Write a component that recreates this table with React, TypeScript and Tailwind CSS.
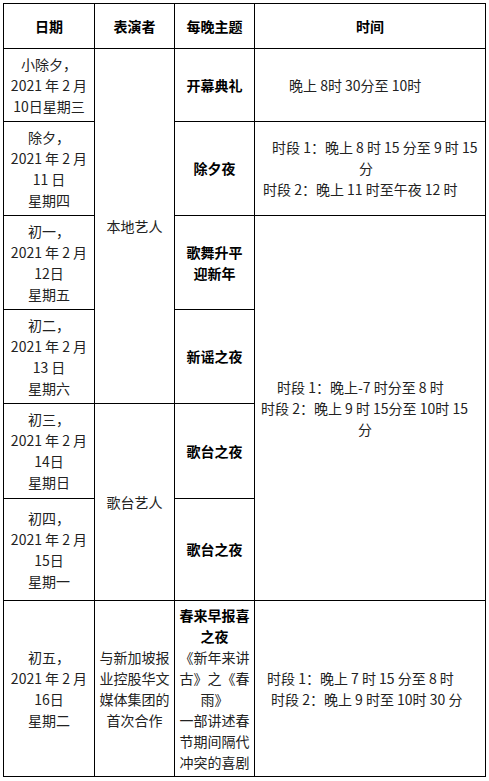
import React from "react";

const font = {
  fontFamily: '"Noto Sans CJK SC", "Noto Sans", sans-serif',
};

function Lines({ lines, bold }: { lines: string[]; bold?: boolean }) {
  return (
    <div className={bold ? "font-bold text-black" : "text-[#222]"}>
      {lines.map((l, i) => (
        <div key={i} className="whitespace-nowrap">
          {l}
        </div>
      ))}
    </div>
  );
}

function TimeLines({ lines }: { lines: { t: string; pl: number }[] }) {
  return (
    <div className="text-left text-[#222]">
      {lines.map((l, i) => (
        <div key={i} className="whitespace-nowrap" style={{ paddingLeft: l.pl }}>
          {l.t}
        </div>
      ))}
    </div>
  );
}

const td = "border border-black align-middle text-center p-0";

export default function App() {
  return (
    <div className="bg-white w-[489px] h-[781px] pt-[3px] pl-[3px]" style={font}>
      <table className="border-collapse table-fixed w-[482px] text-[14px] leading-[21px]">
        <colgroup>
          <col className="w-[91px]" />
          <col className="w-[80px]" />
          <col className="w-[80px]" />
          <col className="w-[231px]" />
        </colgroup>
        <tbody>
          <tr className="h-[45px]">
            <td className={td + " font-bold text-black"}>日期</td>
            <td className={td + " font-bold text-black"}>表演者</td>
            <td className={td + " font-bold text-black"}>每晚主题</td>
            <td className={td + " font-bold text-black"}>时间</td>
          </tr>
          <tr className="h-[73px]">
            <td className={td}>
              <Lines lines={["小除夕，", "2021 年 2 月", "10日星期三"]} />
            </td>
            <td className={td} rowSpan={4}>
              <Lines lines={["本地艺人"]} />
            </td>
            <td className={td}>
              <Lines bold lines={["开幕典礼"]} />
            </td>
            <td className={td}>
              <TimeLines lines={[{ t: "晚上 8时 30分至 10时", pl: 34 }]} />
            </td>
          </tr>
          <tr className="h-[94px]">
            <td className={td}>
              <Lines lines={["除夕，", "2021 年 2 月", "11 日", "星期四"]} />
            </td>
            <td className={td}>
              <Lines bold lines={["除夕夜"]} />
            </td>
            <td className={td}>
              <TimeLines
                lines={[
                  { t: "时段 1：晚上 8 时 15 分至 9 时 15", pl: 17 },
                  { t: "分", pl: 104 },
                  { t: "时段 2：晚上 11 时至午夜 12 时", pl: 8 },
                ]}
              />
            </td>
          </tr>
          <tr className="h-[94px]">
            <td className={td}>
              <Lines lines={["初一，", "2021 年 2 月", "12日", "星期五"]} />
            </td>
            <td className={td}>
              <Lines bold lines={["歌舞升平", "迎新年"]} />
            </td>
            <td className={td} rowSpan={4}>
              <TimeLines
                lines={[
                  { t: "时段 1：晚上-7 时分至 8 时", pl: 22 },
                  { t: "时段 2：晚上 9 时 15分至 10时 15", pl: 6 },
                  { t: "分", pl: 103 },
                ]}
              />
            </td>
          </tr>
          <tr className="h-[94px]">
            <td className={td}>
              <Lines lines={["初二，", "2021 年 2 月", "13 日", "星期六"]} />
            </td>
            <td className={td}>
              <Lines bold lines={["新谣之夜"]} />
            </td>
          </tr>
          <tr className="h-[95px]">
            <td className={td}>
              <Lines lines={["初三，", "2021 年 2 月", "14日", "星期日"]} />
            </td>
            <td className={td} rowSpan={2}>
              <Lines lines={["歌台艺人"]} />
            </td>
            <td className={td}>
              <Lines bold lines={["歌台之夜"]} />
            </td>
          </tr>
          <tr className="h-[102px]">
            <td className={td}>
              <Lines lines={["初四，", "2021 年 2 月", "15日", "星期一"]} />
            </td>
            <td className={td}>
              <Lines bold lines={["歌台之夜"]} />
            </td>
          </tr>
          <tr className="h-[176px]">
            <td className={td}>
              <Lines lines={["初五，", "2021 年 2 月", "16日", "星期二"]} />
            </td>
            <td className={td}>
              <Lines lines={["与新加坡报", "业控股华文", "媒体集团的", "首次合作"]} />
            </td>
            <td className={td}>
              <Lines bold lines={["春来早报喜", "之夜"]} />
              <Lines
                lines={["《新年来讲", "古》之《春", "雨》", "一部讲述春", "节期间隔代", "冲突的喜剧"]}
              />
            </td>
            <td className={td}>
              <TimeLines
                lines={[
                  { t: "时段 1：晚上 7 时 15 分至 8 时", pl: 12 },
                  { t: "时段 2：晚上 9 时至 10时 30 分", pl: 16 },
                ]}
              />
            </td>
          </tr>
        </tbody>
      </table>
    </div>
  );
}
